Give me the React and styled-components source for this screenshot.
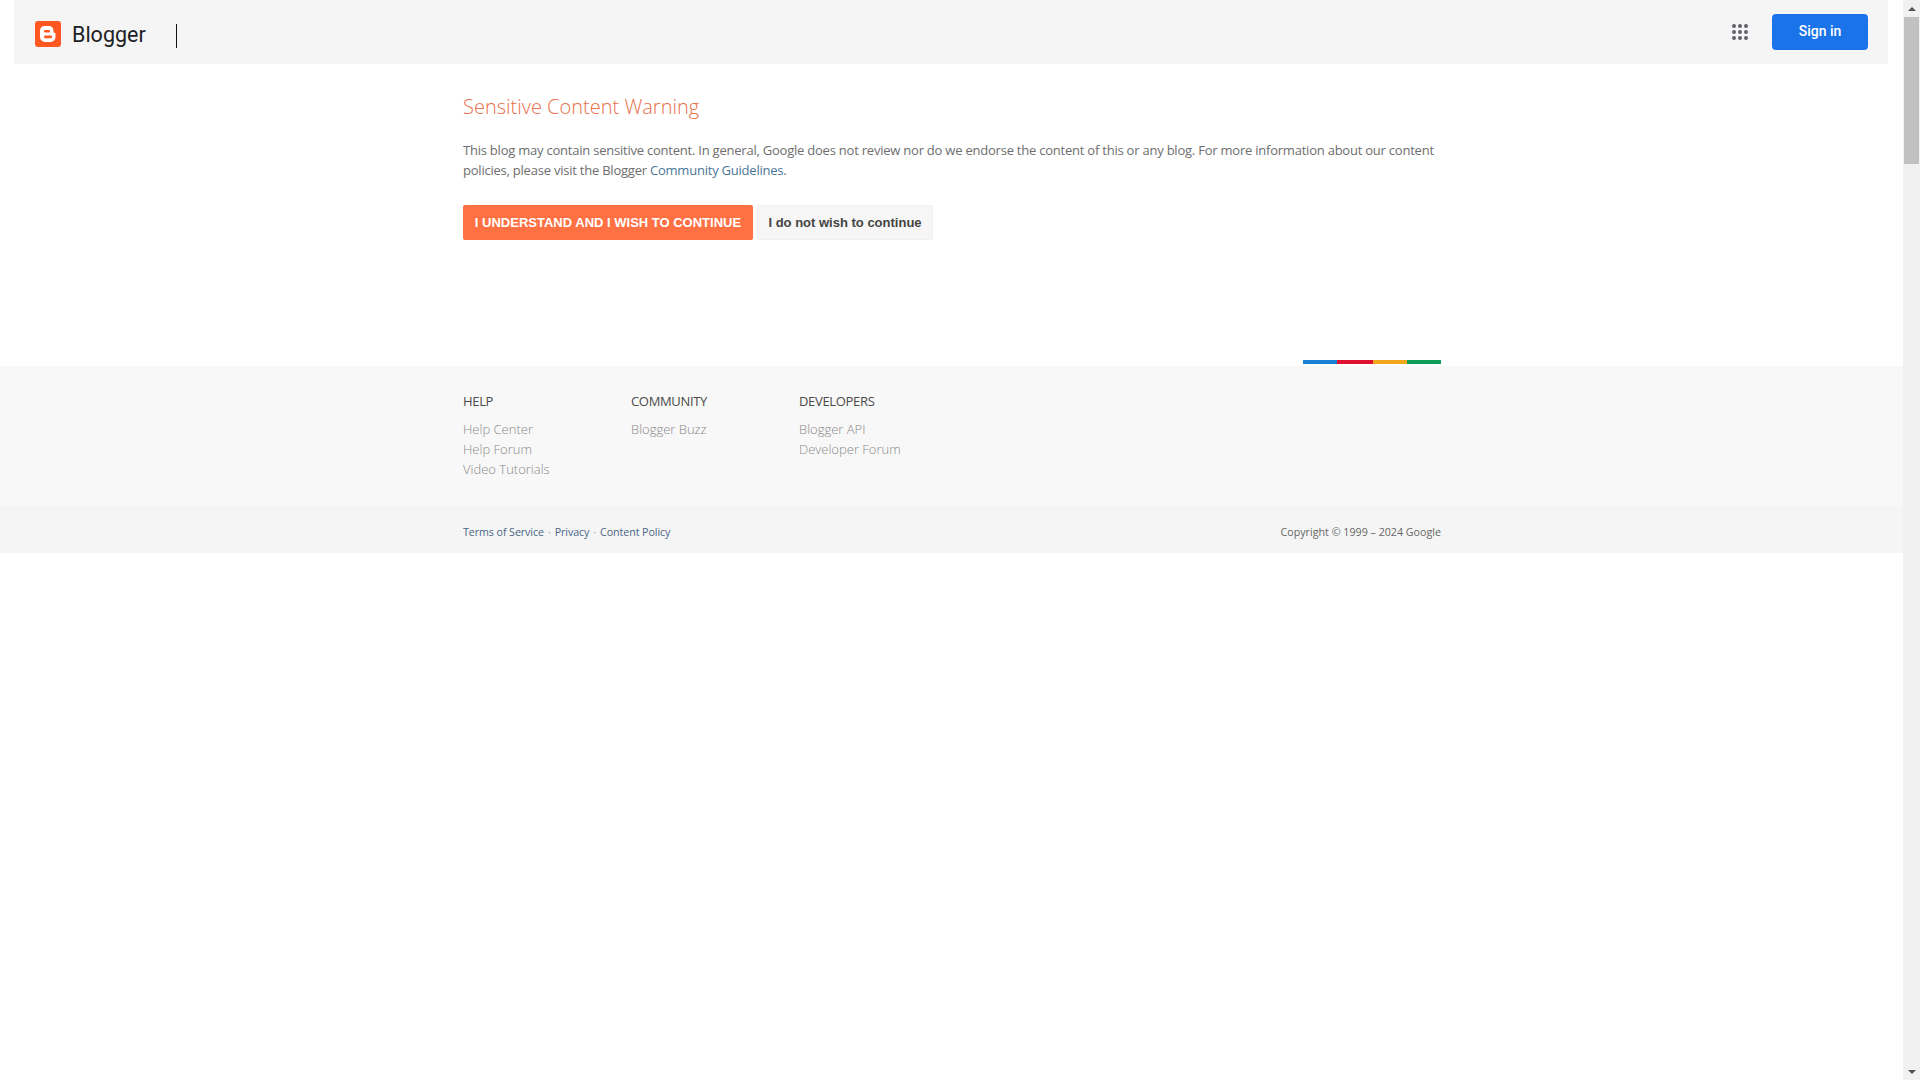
import styled, { createGlobalStyle } from 'styled-components';

const GlobalStyle = createGlobalStyle`
  html, body {
    margin: 0;
    padding: 0;
    height: 100%;
    background: #fff;
    overflow: hidden;
  }
  #root {
    height: 100%;
  }
`;

const Shell = styled.div`
  display: flex;
  height: 1080px;
  font-family: 'Open Sans', 'Liberation Sans', sans-serif;
`;

const Page = styled.div`
  flex: 1;
  min-width: 0;
`;

const Header = styled.header`
  height: 64px;
  margin: 0 15px 0 14px;
  padding: 0 20px 0 21px;
  background: #f5f5f5;
  display: flex;
  align-items: center;
`;

const Brand = styled.div`
  display: flex;
  align-items: center;
  gap: 11px;
  margin-top: 4px;
`;

const BrandName = styled.span`
  font-family: Roboto, 'Liberation Sans', sans-serif;
  font-size: 21.5px;
  color: #202124;
`;

const Divider = styled.span`
  width: 1px;
  height: 24px;
  margin: 7px 0 0 30px;
  background: #111;
`;

const HeaderEnd = styled.div`
  margin-left: auto;
  display: flex;
  align-items: center;
  gap: 24px;
`;

const SignIn = styled.button`
  width: 96px;
  height: 36px;
  border: 0;
  border-radius: 4px;
  padding: 0 0 2px;
  background: #1a73e8;
  color: #fff;
  font-family: Roboto, 'Liberation Sans', sans-serif;
  font-size: 14px;
  font-weight: 500;
`;

const Content = styled.main`
  width: 978px;
  margin-left: 463px;
  height: 296px;
  padding-top: 28px;
  box-sizing: border-box;
`;

const Title = styled.h1`
  margin: 0;
  font-size: 20px;
  line-height: 30px;
  font-weight: 300;
  color: #e8704a;
`;

const Notice = styled.p`
  margin: 18px 0 0;
  font-size: 13px;
  line-height: 20px;
  font-weight: 400;
  letter-spacing: -0.225px;
  color: #6e6e6e;
`;

const TextLink = styled.a`
  color: #4a7697;
  text-decoration: none;
`;

const Actions = styled.div`
  display: flex;
  gap: 4px;
  margin-top: 25px;
`;

const ActionButton = styled.button`
  height: 35px;
  padding: 0;
  width: ${(p) => p.$width}px;
  border: ${(p) => (p.$primary ? '0' : '1px solid #f1f1f1')};
  border-radius: 2px;
  font-family: 'Liberation Sans', Arial, sans-serif;
  font-size: 13px;
  font-weight: 700;
  background: ${(p) => (p.$primary ? '#ff7043' : '#f6f6f6')};
  color: ${(p) => (p.$primary ? '#fff' : '#444')};
`;

const ColorBar = styled.div`
  width: 138px;
  height: 4px;
  margin: 0 0 2px 1303px;
  display: flex;
`;

const ColorStop = styled.span`
  flex: ${(p) => p.$grow};
  background: ${(p) => p.$color};
`;

const Footer = styled.footer`
  background: #f8f8f8;
  height: 140px;
  padding: 24px 0 0 463px;
  box-sizing: border-box;
  display: flex;
`;

const Column = styled.div`
  width: 168px;
`;

const ColumnTitle = styled.h2`
  margin: 0 0 7px;
  font-size: 13px;
  line-height: 22px;
  font-weight: 400;
  letter-spacing: -0.33px;
  color: #4a4a4a;
  text-transform: uppercase;
`;

const ColumnLink = styled.a`
  display: block;
  font-size: 13px;
  line-height: 20px;
  font-weight: 300;
  color: #8a8a8a;
`;

const LegalBar = styled.div`
  background: #f5f5f5;
  height: 47px;
  padding: 5px 0 0 463px;
  box-sizing: border-box;
  display: flex;
  align-items: center;
`;

const LegalInner = styled.div`
  width: 978px;
  display: flex;
  justify-content: space-between;
  font-size: 10.7px;
  font-weight: 400;
  color: #666;
`;

const LegalLinks = styled.div`
  display: flex;
  gap: 4px;
  letter-spacing: -0.08px;
  color: #999;
`;

const LegalLink = styled.a`
  color: #4a6685;
`;

const Scrollbar = styled.aside`
  width: 17px;
  background: #f1f1f1;
  display: flex;
  flex-direction: column;
  align-items: center;
`;

const ScrollArrow = styled.span`
  height: 17px;
  display: flex;
  align-items: center;
  justify-content: center;
  &::before {
    content: '';
    border-left: 4px solid transparent;
    border-right: 4px solid transparent;
    ${(p) => (p.$down ? 'border-top' : 'border-bottom')}: 4px solid #505050;
  }
`;

const ScrollThumb = styled.span`
  width: 15px;
  height: 147px;
  background: #c1c1c1;
`;

const ScrollSpace = styled.span`
  flex: 1;
`;

const BloggerLogo = () => (
  <svg width="26" height="26" viewBox="0 0 26 26">
    <rect width="26" height="26" rx="3" fill="#ff5722" />
    <path
      d="M9.5 5h4.5a4.5 4.5 0 0 1 4.5 4.5v1a1.6 1.6 0 0 0 1.6 1.6h.4v3.9a5 5 0 0 1-5 5h-5.5a5 5 0 0 1-5-5V9.5A4.5 4.5 0 0 1 9.5 5z"
      fill="#fff"
    />
    <rect x="9" y="9" width="6" height="2.6" rx="1.3" fill="#ff5722" />
    <rect x="9" y="14.6" width="8" height="2.6" rx="1.3" fill="#ff5722" />
  </svg>
);

const AppsIcon = () => (
  <svg width="16" height="16" viewBox="0 0 16 16" fill="#5f6368">
    {[2, 8, 14].flatMap((cy) =>
      [2, 8, 14].map((cx) => <circle key={`${cx}-${cy}`} cx={cx} cy={cy} r="2" />)
    )}
  </svg>
);

const columns = [
  { title: 'Help', links: ['Help Center', 'Help Forum', 'Video Tutorials'] },
  { title: 'Community', links: ['Blogger Buzz'] },
  { title: 'Developers', links: ['Blogger API', 'Developer Forum'] },
];

export default function App() {
  return (
    <Shell>
      <GlobalStyle />
      <Page>
        <Header>
          <Brand>
            <BloggerLogo />
            <BrandName>Blogger</BrandName>
          </Brand>
          <Divider />
          <HeaderEnd>
            <AppsIcon />
            <SignIn>Sign in</SignIn>
          </HeaderEnd>
        </Header>
        <Content>
          <Title>Sensitive Content Warning</Title>
          <Notice>
            This blog may contain sensitive content. In general, Google does not review nor do we
            endorse the content of this or any blog. For more information about our content
            policies, please visit the Blogger <TextLink>Community Guidelines</TextLink>.
          </Notice>
          <Actions>
            <ActionButton $primary $width={290}>
              I UNDERSTAND AND I WISH TO CONTINUE
            </ActionButton>
            <ActionButton $width={176}>I do not wish to continue</ActionButton>
          </Actions>
        </Content>
        <ColorBar>
          <ColorStop $grow={34} $color="#1a82d6" />
          <ColorStop $grow={36} $color="#e0102f" />
          <ColorStop $grow={34} $color="#f4a61c" />
          <ColorStop $grow={34} $color="#0f9d58" />
        </ColorBar>
        <Footer>
          {columns.map((col) => (
            <Column key={col.title}>
              <ColumnTitle>{col.title}</ColumnTitle>
              {col.links.map((l) => (
                <ColumnLink key={l}>{l}</ColumnLink>
              ))}
            </Column>
          ))}
        </Footer>
        <LegalBar>
          <LegalInner>
            <LegalLinks>
              <LegalLink>Terms of Service</LegalLink>
              <span>·</span>
              <LegalLink>Privacy</LegalLink>
              <span>·</span>
              <LegalLink>Content Policy</LegalLink>
            </LegalLinks>
            <span>Copyright © 1999 – 2024 Google</span>
          </LegalInner>
        </LegalBar>
      </Page>
      <Scrollbar>
        <ScrollArrow />
        <ScrollThumb />
        <ScrollSpace />
        <ScrollArrow $down />
      </Scrollbar>
    </Shell>
  );
}
